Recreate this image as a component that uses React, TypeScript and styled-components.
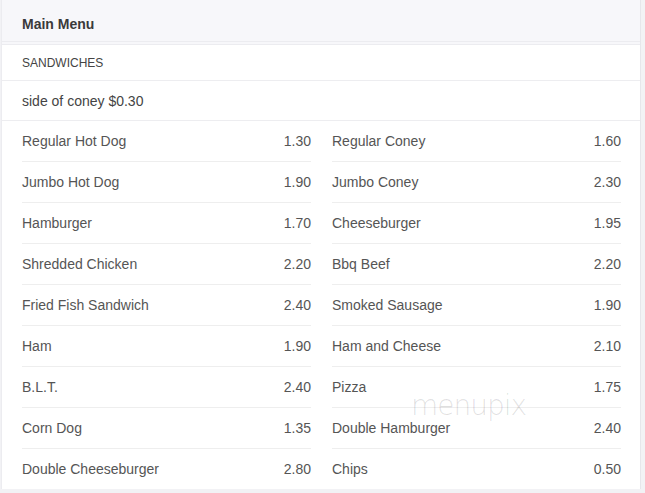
import React from "react";
import styled, { createGlobalStyle } from "styled-components";

const Global = createGlobalStyle`
  html, body { margin: 0; padding: 0; background: #f2f2f5; }
  body { font-family: "Liberation Sans", Arial, sans-serif; }
`;

const Page = styled.div`
  padding-left: 1px;
  width: 645px;
  box-sizing: border-box;
`;

const Card = styled.div`
  position: relative;
  width: 640px;
  box-sizing: border-box;
  background: #fff;
  border-left: 1px solid #ececf0;
  border-right: 1px solid #e6e6eb;
`;

const Header = styled.div`
  height: 42px;
  box-sizing: border-box;
  padding: 7px 0 0 20px;
  background: #f7f7fa;
  border-bottom: 1px solid #ececf0;
  display: flex;
  align-items: center;
  font-size: 14px;
  font-weight: bold;
  color: #3a3a3a;
`;

const Gap = styled.div`
  height: 2px;
  background: #f7f7fa;
  border-bottom: 1px solid #ececf0;
`;

const SectionRow = styled.div<{ $h: number; $size: number }>`
  height: ${(p) => p.$h}px;
  display: flex;
  align-items: center;
  padding-left: 20px;
  font-size: ${(p) => p.$size}px;
  color: #444;
  border-bottom: 1px solid #ededf0;
`;

const Grid = styled.div`
  display: grid;
  grid-template-columns: 309px 309px;
  column-gap: 1px;
  padding: 0 9px 0 10px;
`;

const Item = styled.div<{ $last: boolean }>`
  margin: 0 10px;
  height: 40px;
  display: flex;
  align-items: center;
  justify-content: space-between;
  font-size: 14px;
  color: #555;
  border-bottom: ${(p) => (p.$last ? "none" : "1px solid #eeeeee")};
`;

const Watermark = styled.div`
  position: absolute;
  left: 409px;
  top: 389px;
  font-family: "DejaVu Sans", sans-serif;
  font-size: 28px;
  font-weight: 200;
  letter-spacing: -1px;
  color: rgba(0, 0, 0, 0.12);
  pointer-events: none;
`;

const left: [string, string][] = [
  ["Regular Hot Dog", "1.30"],
  ["Jumbo Hot Dog", "1.90"],
  ["Hamburger", "1.70"],
  ["Shredded Chicken", "2.20"],
  ["Fried Fish Sandwich", "2.40"],
  ["Ham", "1.90"],
  ["B.L.T.", "2.40"],
  ["Corn Dog", "1.35"],
  ["Double Cheeseburger", "2.80"],
];

const right: [string, string][] = [
  ["Regular Coney", "1.60"],
  ["Jumbo Coney", "2.30"],
  ["Cheeseburger", "1.95"],
  ["Bbq Beef", "2.20"],
  ["Smoked Sausage", "1.90"],
  ["Ham and Cheese", "2.10"],
  ["Pizza", "1.75"],
  ["Double Hamburger", "2.40"],
  ["Chips", "0.50"],
];

export default function App() {
  const cells: React.ReactNode[] = [];
  left.forEach((l, i) => {
    const r = right[i];
    const last = i === left.length - 1;
    cells.push(
      <Item key={"l" + i} $last={last}>
        <span>{l[0]}</span>
        <span>{l[1]}</span>
      </Item>
    );
    cells.push(
      <Item key={"r" + i} $last={last}>
        <span>{r[0]}</span>
        <span>{r[1]}</span>
      </Item>
    );
  });
  return (
    <Page>
      <Global />
      <Card>
        <Header>Main Menu</Header>
        <Gap />
        <SectionRow $h={35} $size={12}>SANDWICHES</SectionRow>
        <SectionRow $h={39} $size={14}>side of coney $0.30</SectionRow>
        <Grid>{cells}</Grid>
        <Watermark>menupix</Watermark>
      </Card>
    </Page>
  );
}
